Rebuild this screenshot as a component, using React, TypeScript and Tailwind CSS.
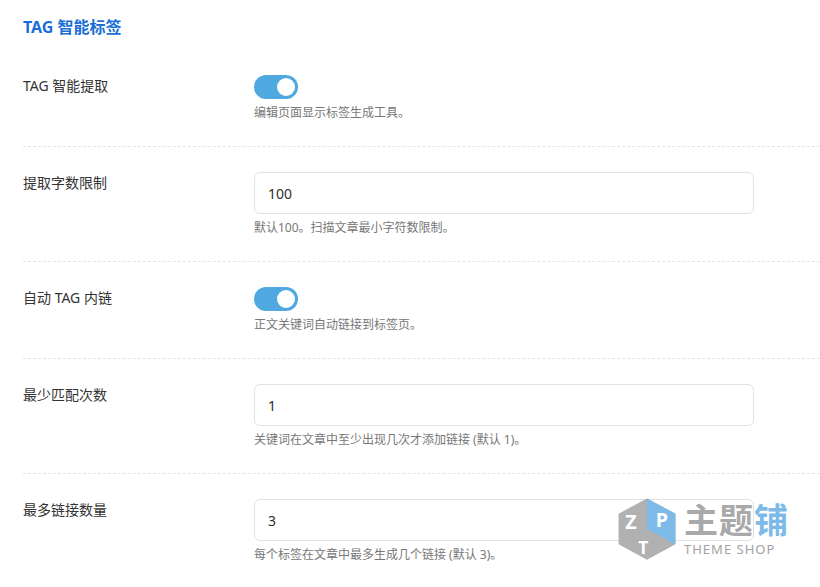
const font = { fontFamily: '"Noto Sans", "Noto Sans CJK SC", sans-serif' };

function Toggle() {
  return (
    <div className="w-[44px] h-[24px] rounded-full bg-[#4fa9e0] flex items-center justify-end pr-[3px]">
      <div className="w-[18px] h-[18px] rounded-full bg-white" />
    </div>
  );
}

function Input({ value }: { value: string }) {
  return (
    <div className="w-[500px] h-[42px] rounded-md border border-[#dfe2e6] bg-white flex items-center px-[13px] text-[14px] text-[#2d2d2d]">
      {value}
    </div>
  );
}

function Row({ label, desc, children, last }: { label: string; desc: string; children: React.ReactNode; last?: boolean }) {
  return (
    <div className={`flex py-[25px] ${last ? "" : "border-b border-dashed border-[#e3e5e8]"}`}>
      <div className="w-[231px] text-[14px] leading-[20px] text-[#333] pt-[1px]">{label}</div>
      <div className="flex flex-col gap-[5px]">
        {children}
        <div className="text-[12px] leading-[17px] text-[#777]">{desc}</div>
      </div>
    </div>
  );
}

export default function App() {
  return (
    <div className="relative w-[820px] h-[587px] bg-white overflow-hidden pl-[23px]" style={font}>
      <div className="pt-[15px] pb-[11px] text-[16px] leading-[24px] font-bold text-[#1a6fd6]">TAG 智能标签</div>
      <Row label="TAG 智能提取" desc="编辑页面显示标签生成工具。">
        <Toggle />
      </Row>
      <Row label="提取字数限制" desc="默认100。扫描文章最小字符数限制。">
        <Input value="100" />
      </Row>
      <Row label="自动 TAG 内链" desc="正文关键词自动链接到标签页。">
        <Toggle />
      </Row>
      <Row label="最少匹配次数" desc="关键词在文章中至少出现几次才添加链接 (默认 1)。">
        <Input value="1" />
      </Row>
      <Row label="最多链接数量" desc="每个标签在文章中最多生成几个链接 (默认 3)。" last>
        <Input value="3" />
      </Row>
      <div className="absolute left-[612px] top-[494px] flex items-center gap-[2px] opacity-90">
        <svg width="70" height="70" viewBox="0 0 64 64">
          <path d="M32 4 L58 18 L58 46 L32 60 L6 46 L6 18 Z" fill="#a9a9a9" />
          <path d="M32 4 L58 18 L58 46 L32 32 Z" fill="#6fb3e6" />
          <text x="40" y="30" fontSize="18" fontWeight="bold" fill="white">P</text>
          <text x="12" y="32" fontSize="18" fontWeight="bold" fill="white">Z</text>
          <text x="24" y="55" fontSize="16" fontWeight="bold" fill="white">T</text>
        </svg>
        <div className="flex flex-col gap-[4px]">
          <div className="text-[34px] font-bold leading-[36px] tracking-[1px]">
            <span className="text-[#a0a0a0]">主题</span>
            <span className="text-[#6fb3e6]">铺</span>
          </div>
          <div className="text-[13px] leading-[14px] text-[#999] tracking-[1px]">THEME SHOP</div>
        </div>
      </div>
    </div>
  );
}
